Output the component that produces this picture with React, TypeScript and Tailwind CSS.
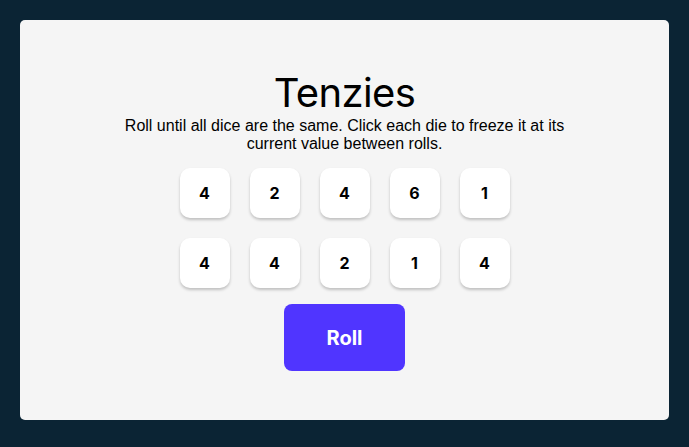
import React from "react";

const dice = [4, 2, 4, 6, 1, 4, 4, 2, 1, 4];

export default function App() {
  return (
    <div className="bg-[#0B2434] w-[689px] h-[447px] p-5 box-border">
      <main className="bg-[#F5F5F5] h-[400px] w-[649px] rounded-[5px] flex flex-col items-center justify-center">
        <h1 className="font-['Inter',sans-serif] text-[40px] leading-[48px] m-0 text-black tracking-[-0.6px] font-normal">
          Tenzies
        </h1>
        <p className="font-['Liberation_Sans',Arial,sans-serif] text-[16px] leading-[18px] text-center max-w-[460px] m-0 text-black">
          Roll until all dice are the same. Click each die to freeze it at its current value between rolls.
        </p>
        <div className="grid grid-cols-5 gap-5 mt-[15px] mb-[16px]">
          {dice.map((d, i) => (
            <div
              key={i}
              className="font-['Inter',sans-serif] w-[50px] h-[50px] bg-white rounded-[10px] flex items-center justify-center shadow-[0_2px_3px_rgba(0,0,0,0.22)] text-[16px] font-bold text-black"
            >
              {d}
            </div>
          ))}
        </div>
        <button className="font-['Inter',sans-serif] w-[121px] h-[67px] bg-[#5035FF] text-white rounded-[8px] text-[20px] font-bold">
          Roll
        </button>
      </main>
    </div>
  );
}
